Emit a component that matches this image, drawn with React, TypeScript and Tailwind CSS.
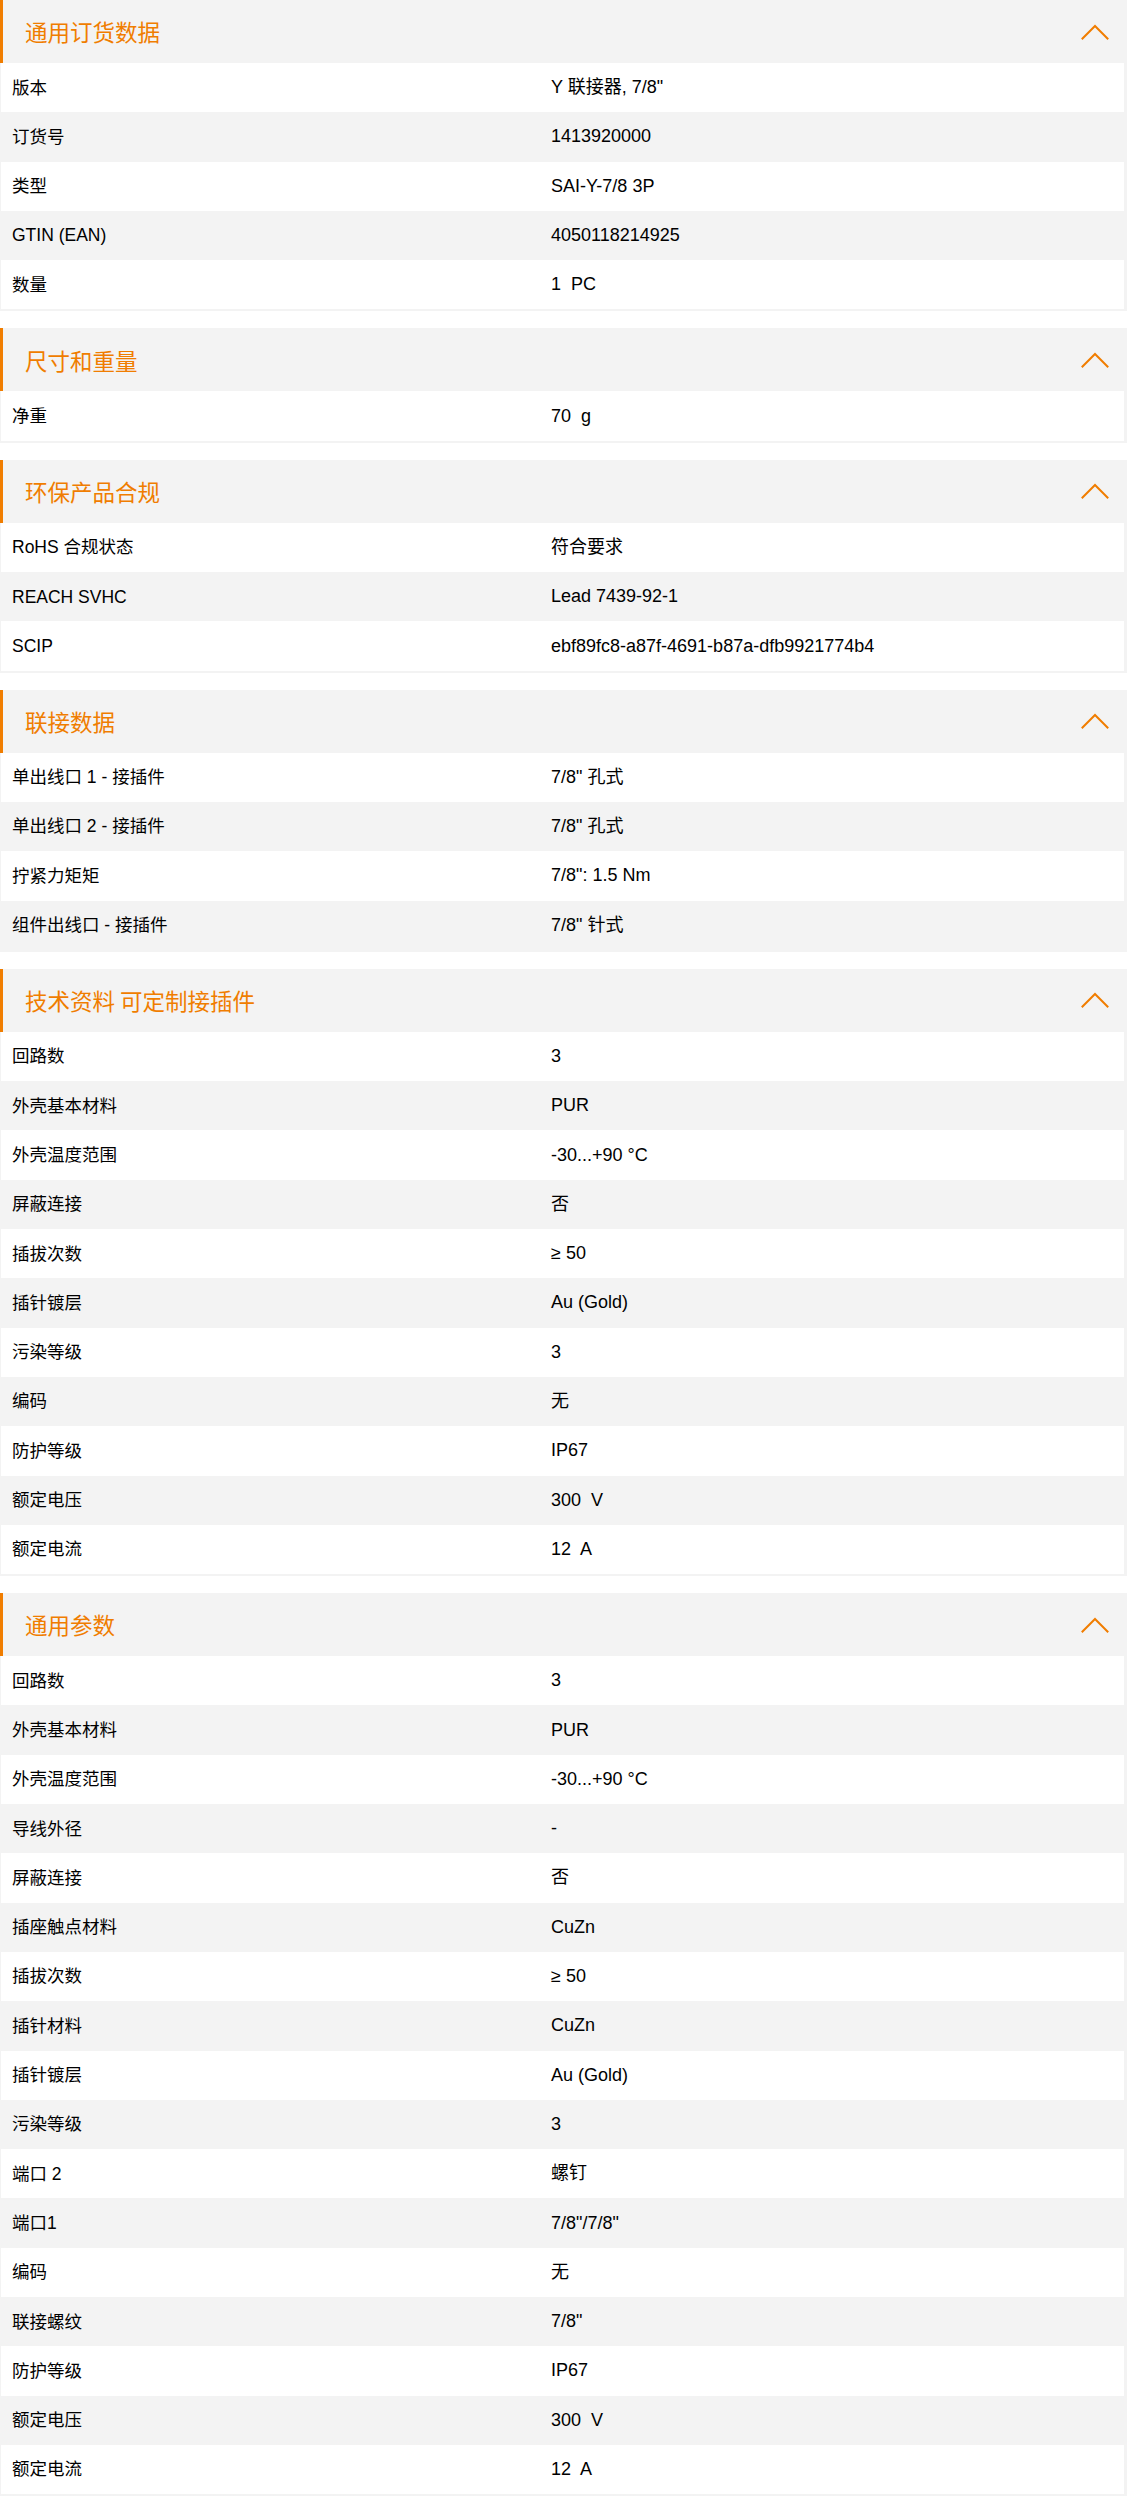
import React from "react";

type Row = [string, string];
type Section = { title: string; rows: Row[] };

const sections: Section[] = [
  {
    title: "通用订货数据",
    rows: [
      ["版本", "Y 联接器, 7/8\""],
      ["订货号", "1413920000"],
      ["类型", "SAI-Y-7/8 3P"],
      ["GTIN (EAN)", "4050118214925"],
      ["数量", "1  PC"],
    ],
  },
  { title: "尺寸和重量", rows: [["净重", "70  g"]] },
  {
    title: "环保产品合规",
    rows: [
      ["RoHS 合规状态", "符合要求"],
      ["REACH SVHC", "Lead 7439-92-1"],
      ["SCIP", "ebf89fc8-a87f-4691-b87a-dfb9921774b4"],
    ],
  },
  {
    title: "联接数据",
    rows: [
      ["单出线口 1 - 接插件", "7/8\" 孔式"],
      ["单出线口 2 - 接插件", "7/8\" 孔式"],
      ["拧紧力矩矩", "7/8\": 1.5 Nm"],
      ["组件出线口 - 接插件", "7/8\" 针式"],
    ],
  },
  {
    title: "技术资料 可定制接插件",
    rows: [
      ["回路数", "3"],
      ["外壳基本材料", "PUR"],
      ["外壳温度范围", "-30...+90 °C"],
      ["屏蔽连接", "否"],
      ["插拔次数", "≥ 50"],
      ["插针镀层", "Au (Gold)"],
      ["污染等级", "3"],
      ["编码", "无"],
      ["防护等级", "IP67"],
      ["额定电压", "300  V"],
      ["额定电流", "12  A"],
    ],
  },
  {
    title: "通用参数",
    rows: [
      ["回路数", "3"],
      ["外壳基本材料", "PUR"],
      ["外壳温度范围", "-30...+90 °C"],
      ["导线外径", "-"],
      ["屏蔽连接", "否"],
      ["插座触点材料", "CuZn"],
      ["插拔次数", "≥ 50"],
      ["插针材料", "CuZn"],
      ["插针镀层", "Au (Gold)"],
      ["污染等级", "3"],
      ["端口 2", "螺钉"],
      ["端口1", "7/8\"/7/8\""],
      ["编码", "无"],
      ["联接螺纹", "7/8\""],
      ["防护等级", "IP67"],
      ["额定电压", "300  V"],
      ["额定电流", "12  A"],
    ],
  },
];

function Chevron() {
  return (
    <svg width="28" height="16" viewBox="0 0 28 16" fill="none" className="block">
      <path d="M1.5 14.5 L14 2 L26.5 14.5" stroke="#f07d00" strokeWidth="2" strokeLinecap="square" />
    </svg>
  );
}

function SectionBlock({ s }: { s: Section }) {
  return (
    <div className="mb-[17px]">
      <div className="flex h-[63px] items-center justify-between border-l-[3px] border-[#f07d00] bg-[#f3f3f3] pl-[22px] pr-[18px]">
        <span
          className="text-[22.5px] font-normal leading-none text-[#f07d00]"
          style={{ fontFamily: '"Noto Sans CJK SC", "Liberation Sans", sans-serif' }}
        >
          {s.title}
        </span>
        <Chevron />
      </div>
      <div className="bg-[#f3f3f3] pl-px pr-[3px] pb-[2px]">
        {s.rows.map(([k, v], i) => (
          <div
            key={i}
            className={`grid h-[49.3px] grid-cols-[538px_1fr] items-center ${i % 2 === 0 ? "bg-white" : "bg-[#f3f3f3]"}`}
          >
            <div
              className="pl-[11px] text-[17.5px] text-black whitespace-pre"
              style={{ fontFamily: '"Liberation Sans", "Noto Sans CJK SC", sans-serif' }}
            >
              {k}
            </div>
            <div
              className="pl-[12px] text-[18px] text-black whitespace-pre"
              style={{ fontFamily: '"Liberation Sans", "Noto Sans CJK SC", sans-serif' }}
            >
              {v}
            </div>
          </div>
        ))}
      </div>
    </div>
  );
}

export default function App() {
  return (
    <div className="w-[1127px] bg-white">
      {sections.map((s, i) => (
        <SectionBlock key={i} s={s} />
      ))}
    </div>
  );
}
